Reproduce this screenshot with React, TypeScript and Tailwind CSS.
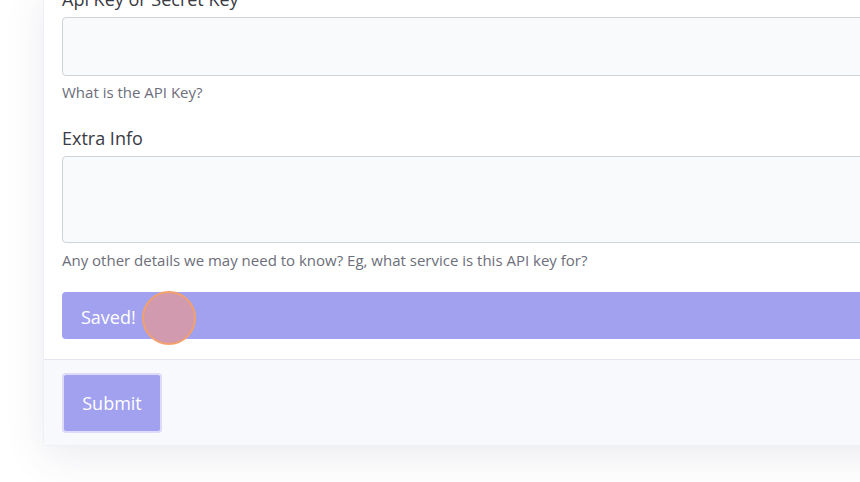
export default function App() {
  return (
    <div
      className="w-[860px] h-[482px] overflow-hidden bg-white flex flex-col justify-end pb-[36px]"
      style={{ fontFamily: '"Open Sans", "Liberation Sans", sans-serif' }}
    >
      <div className="ml-[43px] w-[900px] shrink-0 bg-white rounded-[4px] shadow-[0_10px_40px_rgba(60,60,110,0.10)] border border-[#eef0f4]">
        {/* Card body */}
        <div className="relative px-[18px] pb-[20px]">
          <label className="block text-[18px] leading-[27px] text-[#3a3b45] mb-[4px]">Api Key or Secret Key</label>
          <div className="h-[59px] rounded-[4px] border border-[#ced4da] bg-[#f9fafb]" />
          <p className="mt-[5px] text-[15px] leading-[22px] text-[#6c6e7a]">What is the API Key?</p>

          <label className="block mt-[22px] text-[18px] leading-[27px] text-[#3a3b45] mb-[4px]">Extra Info</label>
          <div className="h-[87px] rounded-[4px] border border-[#ced4da] bg-[#f9fafb]" />
          <p className="mt-[6px] text-[15px] leading-[22px] text-[#6c6e7a]">
            Any other details we may need to know? Eg, what service is this API key for?
          </p>

          <div className="mt-[21px] h-[47px] rounded-[4px] bg-[#a1a1f0] flex items-center px-[19px] pt-[3px] text-[18px] text-white">
            Saved!
          </div>

          {/* click indicator */}
          <div className="absolute left-[98px] bottom-[14px] w-[54px] h-[54px] rounded-full bg-[#d29aaf] border-[2px] border-[#f4a06c]" />
        </div>

        {/* Card footer */}
        <div className="border-t border-[#e3e6f0] bg-[#f8f9fc] px-[18px] pt-[13px] pb-[12px]">
          <button className="w-[100px] h-[60px] rounded-[4px] bg-[#a1a1f0] border-[2px] border-[#dcdcfa] text-[18px] text-white">
            Submit
          </button>
        </div>
      </div>
    </div>
  );
}
